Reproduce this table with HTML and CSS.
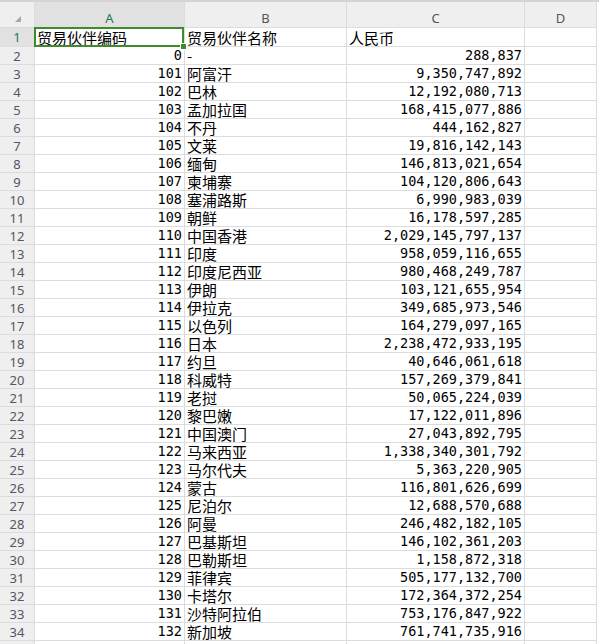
FILE: index.html
```html
<!DOCTYPE html>
<html lang="zh-CN">
<head>
<meta charset="utf-8">
<title>贸易伙伴</title>
<link rel="stylesheet" href="styles.css">
</head>
<body>
<div class="sheet">
  <div class="topbar"></div>
  <div class="grid">
    <div class="corner"><span class="tri"></span></div>
    <div class="ch sel">A</div><div class="ch">B</div><div class="ch">C</div><div class="ch">D</div>

    <div class="rh sel">1</div><div class="c t">贸易伙伴编码</div><div class="c t">贸易伙伴名称</div><div class="c t">人民币</div><div class="c"></div>
    <div class="rh">2</div><div class="c n">0</div><div class="c t">-</div><div class="c n">288,837</div><div class="c"></div>
    <div class="rh">3</div><div class="c n">101</div><div class="c t">阿富汗</div><div class="c n">9,350,747,892</div><div class="c"></div>
    <div class="rh">4</div><div class="c n">102</div><div class="c t">巴林</div><div class="c n">12,192,080,713</div><div class="c"></div>
    <div class="rh">5</div><div class="c n">103</div><div class="c t">孟加拉国</div><div class="c n">168,415,077,886</div><div class="c"></div>
    <div class="rh">6</div><div class="c n">104</div><div class="c t">不丹</div><div class="c n">444,162,827</div><div class="c"></div>
    <div class="rh">7</div><div class="c n">105</div><div class="c t">文莱</div><div class="c n">19,816,142,143</div><div class="c"></div>
    <div class="rh">8</div><div class="c n">106</div><div class="c t">缅甸</div><div class="c n">146,813,021,654</div><div class="c"></div>
    <div class="rh">9</div><div class="c n">107</div><div class="c t">柬埔寨</div><div class="c n">104,120,806,643</div><div class="c"></div>
    <div class="rh">10</div><div class="c n">108</div><div class="c t">塞浦路斯</div><div class="c n">6,990,983,039</div><div class="c"></div>
    <div class="rh">11</div><div class="c n">109</div><div class="c t">朝鲜</div><div class="c n">16,178,597,285</div><div class="c"></div>
    <div class="rh">12</div><div class="c n">110</div><div class="c t">中国香港</div><div class="c n">2,029,145,797,137</div><div class="c"></div>
    <div class="rh">13</div><div class="c n">111</div><div class="c t">印度</div><div class="c n">958,059,116,655</div><div class="c"></div>
    <div class="rh">14</div><div class="c n">112</div><div class="c t">印度尼西亚</div><div class="c n">980,468,249,787</div><div class="c"></div>
    <div class="rh">15</div><div class="c n">113</div><div class="c t">伊朗</div><div class="c n">103,121,655,954</div><div class="c"></div>
    <div class="rh">16</div><div class="c n">114</div><div class="c t">伊拉克</div><div class="c n">349,685,973,546</div><div class="c"></div>
    <div class="rh">17</div><div class="c n">115</div><div class="c t">以色列</div><div class="c n">164,279,097,165</div><div class="c"></div>
    <div class="rh">18</div><div class="c n">116</div><div class="c t">日本</div><div class="c n">2,238,472,933,195</div><div class="c"></div>
    <div class="rh">19</div><div class="c n">117</div><div class="c t">约旦</div><div class="c n">40,646,061,618</div><div class="c"></div>
    <div class="rh">20</div><div class="c n">118</div><div class="c t">科威特</div><div class="c n">157,269,379,841</div><div class="c"></div>
    <div class="rh">21</div><div class="c n">119</div><div class="c t">老挝</div><div class="c n">50,065,224,039</div><div class="c"></div>
    <div class="rh">22</div><div class="c n">120</div><div class="c t">黎巴嫩</div><div class="c n">17,122,011,896</div><div class="c"></div>
    <div class="rh">23</div><div class="c n">121</div><div class="c t">中国澳门</div><div class="c n">27,043,892,795</div><div class="c"></div>
    <div class="rh">24</div><div class="c n">122</div><div class="c t">马来西亚</div><div class="c n">1,338,340,301,792</div><div class="c"></div>
    <div class="rh">25</div><div class="c n">123</div><div class="c t">马尔代夫</div><div class="c n">5,363,220,905</div><div class="c"></div>
    <div class="rh">26</div><div class="c n">124</div><div class="c t">蒙古</div><div class="c n">116,801,626,699</div><div class="c"></div>
    <div class="rh">27</div><div class="c n">125</div><div class="c t">尼泊尔</div><div class="c n">12,688,570,688</div><div class="c"></div>
    <div class="rh">28</div><div class="c n">126</div><div class="c t">阿曼</div><div class="c n">246,482,182,105</div><div class="c"></div>
    <div class="rh">29</div><div class="c n">127</div><div class="c t">巴基斯坦</div><div class="c n">146,102,361,203</div><div class="c"></div>
    <div class="rh">30</div><div class="c n">128</div><div class="c t">巴勒斯坦</div><div class="c n">1,158,872,318</div><div class="c"></div>
    <div class="rh">31</div><div class="c n">129</div><div class="c t">菲律宾</div><div class="c n">505,177,132,700</div><div class="c"></div>
    <div class="rh">32</div><div class="c n">130</div><div class="c t">卡塔尔</div><div class="c n">172,364,372,254</div><div class="c"></div>
    <div class="rh">33</div><div class="c n">131</div><div class="c t">沙特阿拉伯</div><div class="c n">753,176,847,922</div><div class="c"></div>
    <div class="rh">34</div><div class="c n">132</div><div class="c t">新加坡</div><div class="c n">761,741,735,916</div><div class="c"></div>
    <div class="rh">35</div><div class="c n"></div><div class="c t"></div><div class="c n"></div><div class="c"></div>
  </div>
  <div class="selection"><span class="handle"></span></div>
</div>
</body>
</html>
```

FILE: styles.css
```css
html, body {
  margin: 0;
  padding: 0;
  background: #ffffff;
  overflow: hidden;
}

.sheet {
  position: relative;
  width: 599px;
  height: 644px;
  overflow: hidden;
  background: #ffffff;
}

.topbar {
  height: 2px;
  background: #d4d4d4;
}

.grid {
  display: grid;
  grid-template-columns: 34px 149px 161px 177px 71px;
  grid-template-rows: 25px 18px;
  grid-auto-rows: 17px;
  gap: 1px;
  width: 596px;
  border-right: 1px solid #dcdcdc;
  background: #dcdcdc;
}

.corner {
  background: #efefef;
  position: relative;
}

.tri {
  position: absolute;
  left: 15px;
  top: 14px;
  width: 0;
  height: 0;
  border-left: 6px solid transparent;
  border-bottom: 6px solid #a8a8a8;
}

.ch {
  background: #efefef;
  font-family: "Noto Sans", "DejaVu Sans", sans-serif;
  font-size: 13px;
  line-height: 13px;
  color: #555555;
  display: flex;
  justify-content: center;
  align-items: flex-start;
  padding-top: 10px;
  box-sizing: border-box;
}

.ch.sel {
  background: #e1e1e1;
  color: #1e7a56;
}

.rh {
  background: #efefef;
  font-family: "Noto Sans", "DejaVu Sans", sans-serif;
  font-size: 13px;
  color: #555566;
  display: flex;
  justify-content: center;
  align-items: center;
}

.rh.sel {
  background: #e1e1e1;
  color: #1e7a56;
}

.c {
  background: #ffffff;
  color: #000000;
  display: flex;
  align-items: center;
  white-space: nowrap;
  overflow: hidden;
  padding: 0 2px;
  box-sizing: border-box;
}

.t {
  font-family: "Noto Sans CJK SC", "Noto Sans CJK JP", sans-serif;
  font-size: 15px;
  line-height: 17px;
  justify-content: flex-start;
}

.n {
  font-family: "DejaVu Sans Mono", "Liberation Mono", monospace;
  font-size: 13.5px;
  line-height: 17px;
  justify-content: flex-end;
}

.selection {
  position: absolute;
  left: 34px;
  top: 27px;
  width: 150px;
  height: 20px;
  border: 2px solid #3f8a2a;
  box-sizing: border-box;
  pointer-events: none;
}

.handle {
  position: absolute;
  right: -5px;
  bottom: -5px;
  width: 5px;
  height: 5px;
  background: #3f8a2a;
  border: 1px solid #ffffff;
}
```
